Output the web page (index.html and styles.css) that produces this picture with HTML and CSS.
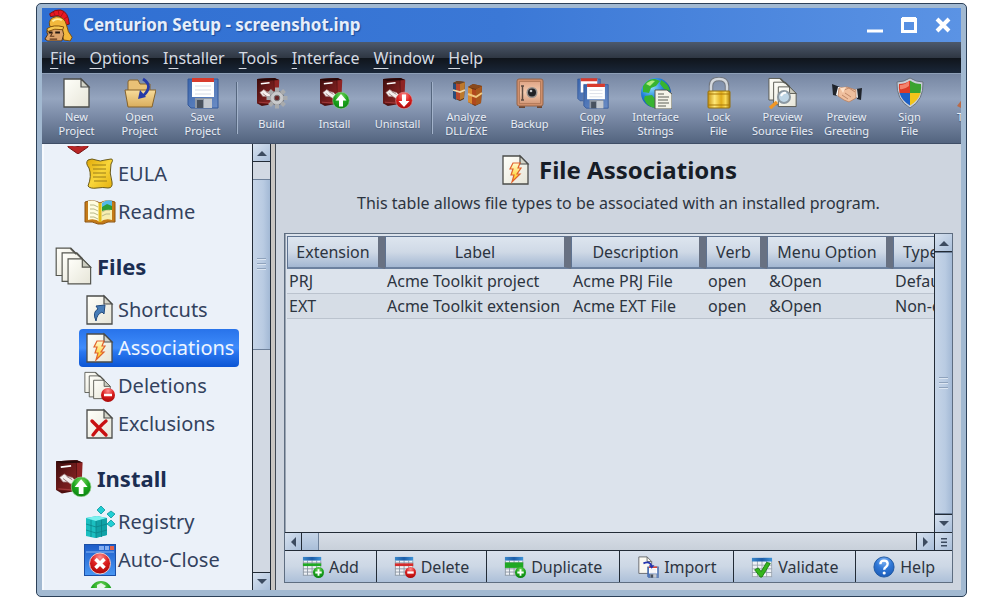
FILE: index.html
```html
<!DOCTYPE html>
<html lang="en">
<head>
<meta charset="utf-8">
<title>Centurion Setup - screenshot.inp</title>
<link rel="stylesheet" href="styles.css">
</head>
<body>
<svg class="sprite" aria-hidden="true">
  <defs>
    <linearGradient id="g-paper" x1="0" y1="0" x2="1" y2="1"><stop offset="0" stop-color="#fffffa"/><stop offset="1" stop-color="#e6e5d8"/></linearGradient>
    <linearGradient id="g-folder" x1="0" y1="0" x2="0" y2="1"><stop offset="0" stop-color="#f8dc9c"/><stop offset="1" stop-color="#d9ad5c"/></linearGradient>
    <linearGradient id="g-box" x1="0" y1="0" x2="1" y2="1"><stop offset="0" stop-color="#3a0c0c"/><stop offset=".5" stop-color="#6b1a1a"/><stop offset="1" stop-color="#8d2525"/></linearGradient>
    <linearGradient id="g-floppy" x1="0" y1="0" x2="1" y2="1"><stop offset="0" stop-color="#3a66ae"/><stop offset="1" stop-color="#6b8cc4"/></linearGradient>
    <linearGradient id="g-gold" x1="0" y1="0" x2="1" y2="0"><stop offset="0" stop-color="#c89210"/><stop offset=".3" stop-color="#ffe97a"/><stop offset=".6" stop-color="#e0ab18"/><stop offset=".8" stop-color="#fbdc58"/><stop offset="1" stop-color="#a87808"/></linearGradient>
    <linearGradient id="g-scroll" x1="0" y1="0" x2="1" y2="1"><stop offset="0" stop-color="#e0a808"/><stop offset=".5" stop-color="#f9d63a"/><stop offset="1" stop-color="#e3b010"/></linearGradient>
    <linearGradient id="g-bolt" x1="0" y1="0" x2="0" y2="1"><stop offset="0" stop-color="#fffbd0"/><stop offset="1" stop-color="#ffc400"/></linearGradient>
    <linearGradient id="g-safe" x1="0" y1="0" x2="0" y2="1"><stop offset="0" stop-color="#e0a586"/><stop offset=".5" stop-color="#f3cbb0"/><stop offset="1" stop-color="#d59a7a"/></linearGradient>
    <radialGradient id="g-green" cx=".5" cy=".25" r=".8"><stop offset="0" stop-color="#7ad860"/><stop offset=".5" stop-color="#1ca51c"/><stop offset="1" stop-color="#0a7d10"/></radialGradient>
    <radialGradient id="g-red" cx=".5" cy=".2" r=".8"><stop offset="0" stop-color="#ff9090"/><stop offset=".5" stop-color="#dc1f1f"/><stop offset="1" stop-color="#a80808"/></radialGradient>
    <radialGradient id="g-blue" cx=".5" cy=".2" r=".8"><stop offset="0" stop-color="#7fb4f4"/><stop offset=".5" stop-color="#2f77d6"/><stop offset="1" stop-color="#1d5cb8"/></radialGradient>
    <radialGradient id="g-globe" cx=".35" cy=".3" r=".8"><stop offset="0" stop-color="#8fe0ff"/><stop offset=".5" stop-color="#1f7fd8"/><stop offset="1" stop-color="#0c3a90"/></radialGradient>
    <linearGradient id="g-win" x1="0" y1="0" x2="0" y2="1"><stop offset="0" stop-color="#1c5cc8"/><stop offset="1" stop-color="#4a98f4"/></linearGradient>
    <linearGradient id="g-thead" x1="0" y1="0" x2="1" y2="0"><stop offset="0" stop-color="#3a86c8"/><stop offset=".5" stop-color="#1c5ca8"/><stop offset="1" stop-color="#3f94d8"/></linearGradient>
  </defs>

  <symbol id="page" viewBox="0 0 32 32"><path d="M3 2h17l8 8v20H3z" fill="url(#g-paper)" stroke="#4b4c4a" stroke-width="1.3"/><path d="M20 2v8h8z" fill="#d4d5c8" stroke="#4b4c4a" stroke-width="1.2"/></symbol>
  <symbol id="pages" viewBox="0 0 32 32">
    <g stroke="#55564f" fill="url(#g-paper)"><path d="M1 1h12l5 5v18H1z"/><path d="M6 5h12l5 5v19H6z"/><path d="M11 10h12l7 7v14H11z"/><path d="M13 1l5 5M18 5l5 5" fill="none" stroke-width="1.6"/><path d="M23 10v7h7z" fill="#cccdc1"/></g>
  </symbol>
  <symbol id="open" viewBox="0 0 32 32"><path d="M4 29V5q0-2 2-2h8l2 4h10v22z" fill="#e9c176" stroke="#85632c"/><path d="M4 13h26l2 0-4 17H4L1 13z" fill="url(#g-folder)" stroke="#85632c"/><path d="M19 2q11 7 0 17" fill="none" stroke="#263aa8" stroke-width="2.8"/><path d="M14 22l2-9 6 7z" fill="#263aa8"/></symbol>
  <symbol id="floppy" viewBox="0 0 32 32"><path d="M1 2h30v29H4l-3-3z" fill="url(#g-floppy)" stroke="#33589a"/><path d="M5 2h22v18H5z" fill="#fff"/><path d="M5 1h22v4H5z" fill="#d83b2d"/><path d="M8 9h16M8 13h16M8 17h16" stroke="#d5dae4"/><path d="M8 21h17v10H8z" fill="#8f98a5"/><path d="M10 23h6v8h-6z" fill="#49525f"/><path d="M17 22h8v9h-8z" fill="#c3c8cf"/></symbol>
  <symbol id="floppies" viewBox="0 0 32 32"><use href="#floppy" x="0" y="0" width="24" height="25"/><use href="#floppy" x="6" y="6" width="26" height="26"/></symbol>
  <symbol id="box" viewBox="0 0 32 32"><path d="M1 2l18-1 4 2-1 24-16 3-5-3z" fill="#4e1010"/><path d="M1 2l17-1 1 27-18-1z" fill="url(#g-box)"/><path d="M19 1l5 2-1 22-4 3z" fill="#8e2424"/><path d="M1 2l18-1 5 2-18 1z" fill="#270808"/><path d="M5 7l9-1" stroke="#fff" stroke-width="1.6"/><path d="M4 16l4-3 3 2 4 1 3 3-4 3-3-2-4 0z" fill="#f5f0ee" stroke="#9b7575" stroke-width=".7"/><path d="M7 17l4 3M10 15l5 3" stroke="#8f6c6c" stroke-width=".8"/><path d="M3 26l14 1" stroke="#a03a3a"/></symbol>
  <symbol id="build" viewBox="0 0 32 32"><use href="#box" width="31" height="31"/><g transform="translate(21 21)"><circle r="7" fill="#b6b8ba" stroke="#6f7174"/><g stroke="#a9abad" stroke-width="4"><path d="M0-10.500v5M0 5.500v5M-10.500 0h5M5.500 0h5M-7.500-7.500l3 3M4.500 4.500l3 3M-7.500 7.500l3-3M4.500-4.500l3-3"/></g><circle r="6" fill="#c9cacc"/><circle r="2.800" fill="#6a2626" stroke="#77797c"/></g></symbol>
  <symbol id="install" viewBox="0 0 32 32"><use href="#box" width="31" height="31"/><circle cx="22" cy="23.500" r="8.300" fill="url(#g-green)" stroke="#8fd08a" stroke-width=".6"/><path d="M22 17l5.500 6.500h-3.500v6h-4v-6h-3.500z" fill="#fff"/></symbol>
  <symbol id="uninstall" viewBox="0 0 32 32"><use href="#box" width="31" height="31"/><circle cx="22" cy="23.500" r="8.300" fill="url(#g-red)" stroke="#e09a9a" stroke-width=".6"/><path d="M22 30l5.500-6h-3.500v-6.500h-4V24h-3.500z" fill="#fff"/></symbol>
  <symbol id="analyze" viewBox="0 0 32 32"><g><path d="M2 6l4-2 8 1-1 17-4 2-7-3z" fill="#59330f"/><path d="M2 6l3 1v16l-3-2z" fill="#274c7c"/><path d="M5 6l4 1v16l-4-1z" fill="#b8472b"/><path d="M9 6l5-1-1 16-4 2z" fill="#bd792b"/><path d="M2 6l5-2 7 1-5 2z" fill="#6d4526"/><path d="M2 13l7 2 5-2" fill="none" stroke="#efd7a6" stroke-width="1.8"/></g><g transform="translate(16 3)"><path d="M1 7l5-3 9 2-1 17-6 3-7-4z" fill="#6a3510"/><path d="M1 7l4 2v15l-4-2z" fill="#d88b33"/><path d="M5 9l4 1v15l-4-1z" fill="#b0481d"/><path d="M9 9l6-3-1 17-5 2z" fill="#a8581d"/><path d="M1 7l5-3 9 2-6 3z" fill="#8a4a1c"/><path d="M1 14l8 3 6-4" fill="none" stroke="#f0c77f" stroke-width="2"/></g></symbol>
  <symbol id="safe" viewBox="0 0 32 32"><path d="M5 29h6v2H5zM23 29h5v2h-5z" fill="#6b4632"/><rect x="3" y="2" width="26" height="27" rx="2" fill="#cf8f6c" stroke="#93644a"/><rect x="5.500" y="4.500" width="21" height="22" fill="url(#g-safe)" stroke="#b57c5c"/><path d="M8.500 9v14M7 9h3M7 23h3" stroke="#5c4a40" stroke-width="1.500"/><circle cx="18" cy="15.500" r="5.500" fill="#96918e"/><circle cx="18" cy="15.500" r="4" fill="#202226"/><circle cx="17" cy="14" r="1.300" fill="#c6c8ca"/></symbol>
  <symbol id="globe" viewBox="0 0 32 32"><circle cx="16" cy="16" r="15" fill="url(#g-globe)"/><path d="M3 9q5-8 12-7l5 2-4 5-5 2-2 5-6-1zM21 3q8 4 9 11l-6-2-4-5zM5 19l7-1 4 5-1 8q-8-1-11-9z" fill="#38b430"/><path d="M6 7q5-5 9-3l-5 5z" fill="#b2ec80"/><path d="M15 13h12l5 4v15H15z" fill="#f4f3e8" stroke="#55574f"/><path d="M18 17h6M18 20h11M18 23h10M18 26h11M18 29h8" stroke="#8f9186" stroke-width="1.300"/></symbol>
  <symbol id="lock" viewBox="0 0 32 32"><path d="M8 15V9q0-7 8-7t8 7v6" fill="none" stroke="#717780" stroke-width="4.500"/><path d="M8 15V9q0-7 8-7t8 7v6" fill="none" stroke="#d4d8dd" stroke-width="2.500"/><rect x="5" y="14" width="22" height="17" rx="1" fill="url(#g-gold)" stroke="#96700e"/><path d="M5 17h22M5 28h22" stroke="#a9790b"/></symbol>
  <symbol id="preview" viewBox="0 0 32 32"><use href="#pages" x="1" width="30" height="31"/><path d="M3 31l7-6" stroke="#f09625" stroke-width="3.500"/><circle cx="17" cy="20" r="6" fill="#bfd6e6" stroke="#8b98a2" stroke-width="2"/><path d="M14 19q2-4 5-3" fill="none" stroke="#fff" stroke-width="2"/></symbol>
  <symbol id="hands" viewBox="0 0 32 32"><path d="M1 7l8 3-3 9-4-1zM31 11l-6 1 1 10 4 1z" fill="#20242b"/><path d="M7 10l3 0-3 9-2-1zM24 13l2-1 1 9-2-1z" fill="#fff"/><path d="M8 11l8-1 9 3v8l-7 4-5-2-6-4z" fill="#efbf9d" stroke="#b98060" stroke-width=".8"/><path d="M13 13l5-2 6 4M11 18l6 4M14 16l6 4" fill="none" stroke="#c08868"/><path d="M9 11l6-1-3 6z" fill="#fde0c6"/></symbol>
  <symbol id="shield" viewBox="0 0 32 32"><path d="M16 1q6 4 13 4 1 18-13 26Q2 23 3 5q7 0 13-4z" fill="#c9cfd8" stroke="#69737f"/><path d="M16 3.500V16H5.500Q4.500 11 5 7q6 0 11-3.500z" fill="#dc3b26"/><path d="M16 3.500V16h10.500q1-5 .500-9-6 0-11-3.500z" fill="#3ba32e"/><path d="M16 16v12.500Q8 24 5.500 16z" fill="#1c60c6"/><path d="M16 16v12.500q8-4.500 10.500-12.500z" fill="#f2c41b"/><path d="M6 8q5 0 9-4v5q-5 4-9 3z" fill="#f4826c"/></symbol>
  <symbol id="tools" viewBox="0 0 32 32"><path d="M0 29l6-8 5 4-7 6z" fill="#b96b49"/></symbol>
  <symbol id="bolt" viewBox="0 0 32 32"><use href="#page" width="32" height="32"/><path d="M13 9h7l-2 5h3l-4 6h3L12 28l2-7h-3l2-6h-3z" fill="url(#g-bolt)" stroke="#e0622c" stroke-width="1.200"/></symbol>
  <symbol id="shortcut" viewBox="0 0 32 32"><use href="#page" width="32" height="32"/><path d="M12 27q-4-9 2-12l-2-3 9-1-1 9-2-2q-5 2-6 9z" fill="#477db8" stroke="#234b7d"/></symbol>
  <symbol id="exclude" viewBox="0 0 32 32"><use href="#page" width="32" height="32"/><path d="M8 13q6 6 14 14M22 13q-6 5-13 14" fill="none" stroke="#c81010" stroke-width="3.400" stroke-linecap="round"/></symbol>
  <symbol id="deletions" viewBox="0 0 32 32"><use href="#pages" width="28" height="31"/><circle cx="24" cy="25" r="7" fill="url(#g-red)"/><path d="M20 25h8" stroke="#fff" stroke-width="2.500"/></symbol>
  <symbol id="eula" viewBox="0 0 32 32"><path d="M4 2q4-2 8 0t9 0l6-1q3 0 0 5-2 9 1 18 1 6-4 6-5-1-11 0-7 1-9-2 4-10 1-18-4-5-1-8z" fill="url(#g-scroll)" stroke="#6a5a1a"/><path d="M8 7h14M9 11h13M9 15h13M9 19h13M10 23h13" stroke="#9a7c18"/></symbol>
  <symbol id="readme" viewBox="0 0 32 32"><path d="M1 6q8-3 15 1 7-4 15-1v20q-8-1-12 2h-5q-5-3-13-2z" fill="#c47a17" stroke="#8c5410"/><path d="M4 5q7-2 12 3v18q-5-4-12-2z" fill="#fffde0"/><path d="M28 5q-7-2-12 3v18q5-4 12-2z" fill="#f7eeb0"/><path d="M6 9q4-1 8 2M6 13q4-1 8 2M6 17q4-1 8 2M6 21q4-1 8 2M18 16q4-3 8-2M18 20q4-3 8-2" fill="none" stroke="#b7b888"/><path d="M14.500 7h3v19h-3z" fill="#e3bd1a"/><path d="M18 7q5-4 10-2v7q-5-1-10 2z" fill="#53b8e8"/><path d="M18 11l5-3 5 2v4q-5-1-10 1z" fill="#2d9d35"/></symbol>
  <symbol id="registry" viewBox="0 0 32 32"><path d="M2 12l11-2 10 2v17l-12 3-9-2z" fill="#1bbfc0"/><path d="M2 12l11-2 10 2-11 3z" fill="#7af0ee"/><path d="M12 15l11-3v17l-11 3z" fill="#11a2a7"/><path d="M7 14v17M12 15v17M17.500 14v17M2 18l10 3 11-3M2 24l10 3 11-3" fill="none" stroke="#0b8489" stroke-width=".8"/><g fill="#20cfd4" stroke="#0d959c" stroke-width=".8"><path d="M17 0l4 4-4 4-4-4zM27 5l4 3-4 4-4-4zM27 14l4 4-4 3-4-3z"/></g></symbol>
  <symbol id="autoclose" viewBox="0 0 32 32"><rect x=".5" y=".5" width="31" height="31" fill="url(#g-win)" stroke="#1b4fa6"/><path d="M15 2h5v4h-5zM21 2h4v4h-4z" fill="#86aff0"/><path d="M26 2h4v4h-4z" fill="#e0604a"/><path d="M2 8h28" stroke="#8bb9f5"/><circle cx="16" cy="19.500" r="10.500" fill="url(#g-red)" stroke="#eec7c7"/><path d="M11.500 15l9 9M20.500 15l-9 9" stroke="#fff" stroke-width="3.600"/></symbol>
  <symbol id="greenball" viewBox="0 0 32 32"><circle cx="17" cy="14" r="11" fill="url(#g-green)"/><path d="M13 7l4-2 5 3-3 3h-6z" fill="#e8f5ea"/></symbol>
  <symbol id="redtip" viewBox="0 0 32 32"><path d="M6 23q10 3 20 0l0 2-10 7-10-7z" fill="#b92525" stroke="#751414"/></symbol>
  <symbol id="centurion" viewBox="0 0 32 36">
    <path d="M6 6q6-5 12-4 8 2 9 15l-4 1q-2-8-8-10l-8 1z" fill="#e81820" stroke="#741010"/>
    <path d="M10 4l2 4M15 2l1 5M21 4l-3 5M25 9l-4 3" stroke="#a80f18"/>
    <path d="M6 19q-2-8 7-10 9 0 11 9l2 7 4 6-2 4-7-1-3-10z" fill="#f2b83c" stroke="#7c4c08"/>
    <path d="M9 14q5-4 10-1" fill="none" stroke="#fff0a0" stroke-width="2"/>
    <path d="M4 22q-2 4 0 6l-3 5 3 2h15l2-7-2-8q-8-1-15 2z" fill="#dba36c" stroke="#50310f"/>
    <path d="M3 22q7-5 18-2l-1 3q-9-2-16 2z" fill="#f6c650" stroke="#7c4c08"/>
    <path d="M5 26h4M12 26h5" stroke="#221710" stroke-width="2"/>
    <path d="M9 26l-2 4h4M6 33h8" fill="none" stroke="#60391d" stroke-width="1.200"/>
  </symbol>

  <symbol id="grid" viewBox="0 0 24 24"><path d="M1 1h20v20H1z" fill="#eff2f6"/><path d="M1 7.500h20M1 14h20M1 17.500h20M1 21h20M1.500 5v16M6 5v16M11 5v16M16 5v16M20.500 5v16" stroke="#8c97a4"/><path d="M1 1h20v4H1z" fill="url(#g-thead)"/></symbol>
  <symbol id="add" viewBox="0 0 24 24"><use href="#grid" width="24" height="24"/><path d="M1 8h20v3H1z" fill="#20a824"/><circle cx="18" cy="18" r="6" fill="url(#g-green)"/><path d="M18 14.500v7M14.500 18h7" stroke="#fff" stroke-width="2"/></symbol>
  <symbol id="delete" viewBox="0 0 24 24"><use href="#grid" width="24" height="24"/><path d="M1 8h20v3H1z" fill="#d42c2c"/><circle cx="18" cy="18" r="6" fill="url(#g-red)"/><path d="M14.500 18h7" stroke="#fff" stroke-width="2.500"/></symbol>
  <symbol id="duplicate" viewBox="0 0 24 24"><use href="#grid" width="24" height="24"/><path d="M1 7h20v6H1z" fill="#20a824"/><circle cx="18" cy="18" r="6" fill="url(#g-green)"/><path d="M18 14.500v7M14.500 18h7" stroke="#fff" stroke-width="2"/></symbol>
  <symbol id="import" viewBox="0 0 24 24"><path d="M2 1h9l5 5v13H2z" fill="#fbfaf2" stroke="#65666a"/><path d="M11 1v5h5" fill="none" stroke="#65666a"/><use href="#floppy" x="11" y="11" width="13" height="13"/><path d="M7 8q7-3 9 3" fill="none" stroke="#2436b0" stroke-width="2"/><path d="M13 10h6l-3 4z" fill="#2436b0"/></symbol>
  <symbol id="validate" viewBox="0 0 24 24"><path d="M1 2h22v21H1z" fill="#eff2f6"/><path d="M1 10h22M1 14h22M1 18h22M1 22.500h22M1.500 5v18M7 5v18M12 5v18M17 5v18M22.500 5v18" stroke="#9aa4b0"/><path d="M1 2h22v4H1z" fill="url(#g-thead)"/><path d="M4 15l4-2 3 4 6-10 4 1-9 15h-2z" fill="#35b51c" stroke="#1b7d10"/></symbol>
  <symbol id="help" viewBox="0 0 24 24"><circle cx="12" cy="12" r="11" fill="url(#g-blue)" stroke="#1c559f"/><path d="M8 9q0-4 4-4t4 3.500q0 2-2 3.500-1.800 1.200-1.800 3" fill="none" stroke="#fff" stroke-width="2.600"/><circle cx="12.200" cy="18.500" r="1.700" fill="#fff"/></symbol>
</svg>

<div class="window">
  <header class="titlebar">
    <svg class="logo"><use href="#centurion"/></svg>
    <span class="caption">Centurion Setup - screenshot.inp</span>
    <div class="controls">
      <button class="ctl" aria-label="Minimize"><svg viewBox="0 0 16 16"><path d="M0 14h16" stroke="#fff" stroke-width="3"/></svg></button>
      <button class="ctl" aria-label="Maximize"><svg viewBox="0 0 16 16"><path d="M1 2.500h14" stroke="#fff" stroke-width="5"/><path d="M1.500 1v13.500h13V1" fill="none" stroke="#fff" stroke-width="3"/></svg></button>
      <button class="ctl" aria-label="Close"><svg viewBox="0 0 16 16"><path d="M2 2l12 12M14 2L2 14" stroke="#fff" stroke-width="4"/></svg></button>
    </div>
  </header>

  <nav class="menubar" aria-label="Menu">
    <button><u>F</u>ile</button><button><u>O</u>ptions</button><button>I<u>n</u>staller</button><button><u>T</u>ools</button><button><u>I</u>nterface</button><button><u>W</u>indow</button><button><u>H</u>elp</button>
  </nav>

  <div class="toolbar" role="toolbar">
    <button class="tool"><svg><use href="#page"/></svg><span>New<br>Project</span></button>
    <button class="tool"><svg><use href="#open"/></svg><span>Open<br>Project</span></button>
    <button class="tool"><svg><use href="#floppy"/></svg><span>Save<br>Project</span></button>
    <i class="sep"></i>
    <button class="tool"><svg><use href="#build"/></svg><span>Build</span></button>
    <button class="tool"><svg><use href="#install"/></svg><span>Install</span></button>
    <button class="tool"><svg><use href="#uninstall"/></svg><span>Uninstall</span></button>
    <i class="sep"></i>
    <button class="tool"><svg><use href="#analyze"/></svg><span>Analyze<br>DLL/EXE</span></button>
    <button class="tool"><svg><use href="#safe"/></svg><span>Backup</span></button>
    <button class="tool"><svg><use href="#floppies"/></svg><span>Copy<br>Files</span></button>
    <button class="tool"><svg><use href="#globe"/></svg><span>Interface<br>Strings</span></button>
    <button class="tool"><svg><use href="#lock"/></svg><span>Lock<br>File</span></button>
    <button class="tool wide"><svg><use href="#preview"/></svg><span>Preview<br>Source Files</span></button>
    <button class="tool"><svg><use href="#hands"/></svg><span>Preview<br>Greeting</span></button>
    <button class="tool"><svg><use href="#shield"/></svg><span>Sign<br>File</span></button>
    <button class="tool cut"><svg><use href="#tools"/></svg><span>T</span></button>
  </div>

  <div class="body">
    <nav class="sidebar" aria-label="Sections">
      <div class="tree">
        <svg class="peek head"><use href="#redtip"/></svg>
        <a class="item" href="#eula"><svg><use href="#eula"/></svg><span>EULA</span></a>
        <a class="item" href="#readme"><svg><use href="#readme"/></svg><span>Readme</span></a>
        <h2 class="group"><svg><use href="#pages"/></svg><span>Files</span></h2>
        <a class="item" href="#shortcut"><svg><use href="#shortcut"/></svg><span>Shortcuts</span></a>
        <a class="item active" href="#bolt" aria-current="page"><svg><use href="#bolt"/></svg><span>Associations</span></a>
        <a class="item" href="#deletions"><svg><use href="#deletions"/></svg><span>Deletions</span></a>
        <a class="item" href="#exclude"><svg><use href="#exclude"/></svg><span>Exclusions</span></a>
        <h2 class="group"><svg><use href="#install"/></svg><span>Install</span></h2>
        <a class="item" href="#registry"><svg><use href="#registry"/></svg><span>Registry</span></a>
        <a class="item" href="#autoclose"><svg><use href="#autoclose"/></svg><span>Auto-Close</span></a>
        <svg class="peek"><use href="#greenball"/></svg>
      </div>
    </nav>
    <div class="vscroll side-scroll">
      <button class="arrow" aria-label="Scroll up"><svg viewBox="0 0 10 6"><path d="M0 6l5-5 5 5z"/></svg></button>
      <div class="gap"></div>
      <div class="thumb"><i class="grip"></i></div>
      <div class="rest"></div>
      <button class="arrow" aria-label="Scroll down"><svg viewBox="0 0 10 6"><path d="M0 0l5 5 5-5z"/></svg></button>
    </div>
    <div class="splitter"></div>

    <main class="pane">
      <h1><svg><use href="#bolt"/></svg><span>File Associations</span></h1>
      <p>This table allows file types to be associated with an installed program.</p>
      <div class="frame">
        <div class="upper">
          <div class="view">
            <table>
              <colgroup><col class="c-ext"><col class="c-label"><col class="c-desc"><col class="c-verb"><col class="c-menu"><col class="c-type"></colgroup>
              <thead><tr><th>Extension</th><th>Label</th><th>Description</th><th>Verb</th><th>Menu Option</th><th>Type</th></tr></thead>
              <tbody>
                <tr><td>PRJ</td><td>Acme Toolkit project</td><td>Acme PRJ File</td><td>open</td><td>&amp;Open</td><td>Default</td></tr>
                <tr><td>EXT</td><td>Acme Toolkit extension</td><td>Acme EXT File</td><td>open</td><td>&amp;Open</td><td>Non-default</td></tr>
              </tbody>
            </table>
          </div>
          <div class="vscroll">
            <button class="arrow" aria-label="Scroll up"><svg viewBox="0 0 10 6"><path d="M0 6l5-5 5 5z"/></svg></button>
            <div class="thumb full"><i class="grip"></i></div>
            <button class="arrow" aria-label="Scroll down"><svg viewBox="0 0 10 6"><path d="M0 0l5 5 5-5z"/></svg></button>
          </div>
        </div>
        <div class="hscroll">
          <button class="arrow" aria-label="Scroll left"><svg class="side" viewBox="0 0 6 10"><path d="M6 0L1 5l5 5z"/></svg></button>
          <div class="hthumb"></div>
          <div class="rest"></div>
          <button class="arrow" aria-label="Scroll right"><svg class="side" viewBox="0 0 6 10"><path d="M0 0l5 5-5 5z"/></svg></button>
          <button class="arrow" aria-label="Columns"><svg class="list" viewBox="0 0 10 10"><path d="M2 1h6v1.500H2zM2 4.500h6V6H2zM2 8h6v1.500H2z"/></svg></button>
        </div>
        <div class="actions">
          <button><svg><use href="#add"/></svg>Add</button>
          <button><svg><use href="#delete"/></svg>Delete</button>
          <button><svg><use href="#duplicate"/></svg>Duplicate</button>
          <button><svg><use href="#import"/></svg>Import</button>
          <button><svg><use href="#validate"/></svg>Validate</button>
          <button><svg><use href="#help"/></svg>Help</button>
        </div>
      </div>
    </main>
  </div>
</div>
</body>
</html>
```
FILE: styles.css
```css
* { box-sizing: border-box; }

body {
  margin: 0;
  height: 100vh;
  padding: 3px 33px 3px 36px;
  background: #fff;
  font-family: "Noto Sans", "Open Sans", sans-serif;
  font-size: 16px;
  color: #2c3440;
}

button {
  margin: 0;
  padding: 0;
  border: 0;
  background: none;
  font: inherit;
  color: inherit;
}

svg { display: block; flex: none; }
.sprite { position: absolute; width: 0; height: 0; }

.window {
  height: 100%;
  display: flex;
  flex-direction: column;
  border: 1px solid #2c4058;
  border-radius: 5px;
  padding: 4px 5px 6px;
  background: #a2b9d1;
  overflow: hidden;
}

/* Title bar */
.titlebar {
  flex: none;
  height: 34px;
  display: flex;
  align-items: center;
  padding: 0 10px 0 2px;
  background: linear-gradient(90deg, #2f6fd2, #3b78d6 50%, #5b93e4);
}
.logo { width: 30px; height: 34px; }
.caption {
  flex: 1;
  margin-left: 9px;
  font-size: 17px;
  line-height: 24px;
  font-weight: 700;
  color: #e6eefb;
  text-shadow: 1px 1px 1px #1c4a98;
}
.controls { display: flex; gap: 18px; }
.ctl svg { width: 16px; height: 16px; }

/* Menu bar */
.menubar {
  flex: none;
  height: 31px;
  display: flex;
  align-items: center;
  gap: 14px;
  padding: 0 8px;
  background: linear-gradient(#4d596c, #2e3642 52%, #10151c 53%, #1a2739);
  font-size: 16px;
  line-height: 24px;
  color: #d5dae2;
}
.menubar u { text-underline-offset: 4px; text-decoration-thickness: 1px; }

/* Toolbar */
.toolbar {
  flex: none;
  height: 71px;
  display: flex;
  padding: 3px 0 0 3px;
  border-top: 1px solid #8fa0b8;
  border-bottom: 1px solid #3f4e66;
  background: linear-gradient(#7686a2, #95a5bf 36%, #7c8ca8 60%, #53647f);
  overflow: hidden;
}
.tool {
  flex: none;
  width: 63px;
  display: flex;
  flex-direction: column;
  align-items: center;
  justify-content: flex-start;
  color: #e9eef6;
  font-size: 11px;
  line-height: 14px;
  white-space: nowrap;
}
.tool.wide { width: 65px; }
.tool svg { width: 32px; height: 32px; }
.tool span { height: 30px; display: flex; align-items: center; text-align: center; text-shadow: 0 1px 1px #4d5d78; }
.tool.cut { align-items: flex-start; padding-left: 16px; }
.tool.cut span { padding-bottom: 14px; }
.sep {
  flex: none;
  width: 6px;
  height: 52px;
  margin-top: 5px;
  background: linear-gradient(90deg, transparent 2px, #56677f 2px, #56677f 3px, #a3b3cb 3px, #a3b3cb 4px, transparent 4px);
}

/* Body */
.body { flex: 1; min-height: 0; display: flex; background: #ced5df; }

.sidebar {
  flex: none;
  width: 210px;
  padding: 2px 0;
  background: #ebf1f9;
  border-left: 2px solid #f6f9fd;
  overflow: hidden;
}
.tree { height: 100%; overflow: hidden; padding: 0 13px 0 35px; }
.peek { width: 32px; height: 32px; }
.peek { margin-left: 5px; }
.peek.head { margin: -24px 0 0 -17px; }
.item {
  display: flex;
  align-items: center;
  gap: 2px;
  height: 38px;
  margin-top: 1px;
  margin-bottom: -1px;
  padding-left: 5px;
  border-radius: 4px;
  font-size: 20px;
  line-height: 28px;
  color: #33425e;
  text-decoration: none;
  white-space: nowrap;
}
.item svg { width: 32px; height: 32px; }
.item.active { background: linear-gradient(#2873ea, #3f8cfb 50%, #2a77f0 60%, #0b55d4); color: #eef5ff; }
.group {
  display: flex;
  align-items: center;
  gap: 4px;
  height: 60px;
  margin: 0 0 0 -24px;
  padding-top: 12px;
  font-size: 22px;
  line-height: 30px;
  font-weight: 700;
  color: #1b2e52;
}
.group svg { width: 38px; height: 38px; }

/* Scroll bars */
.vscroll {
  flex: none;
  width: 19px;
  display: flex;
  flex-direction: column;
  border: 0 solid #222b36;
  border-width: 0 1px;
  background: #d2d9e3;
}
.arrow {
  flex: none;
  width: 17px;
  height: 17px;
  display: flex;
  align-items: center;
  justify-content: center;
  background: linear-gradient(135deg, #d6e1ef, #aabfda);
  fill: #3c4b60;
}
.arrow svg { width: 10px; height: 6px; }
.arrow svg.side { width: 6px; height: 10px; }
.arrow svg.list { width: 10px; height: 10px; }
.vscroll .arrow { height: 18px; }
.vscroll .arrow:first-child { border-bottom: 1px solid #222b36; }
.vscroll .arrow:last-child { border-top: 1px solid #222b36; }
.gap { flex: 17; }
.thumb {
  flex: 170;
  display: flex;
  align-items: center;
  justify-content: center;
  border: 1px solid #6d8099;
  border-width: 1px 0;
  background: linear-gradient(90deg, #c6d5e8, #b9cbe2 60%, #a3b9d5);
}
.grip { width: 9px; height: 12px; background: repeating-linear-gradient(#8fa3bd 0 1px, #dbe5f1 1px 2px, transparent 2px 5px); }
.side-scroll .rest { flex: 224; }
.splitter { flex: none; width: 5px; border-right: 1px solid #3f4853; background: #c9c6c2; }

/* Main pane */
.pane { flex: 1; min-width: 0; display: flex; flex-direction: column; padding: 8px 8px 7px; }
.pane h1 {
  display: flex;
  align-items: center;
  justify-content: center;
  gap: 7px;
  margin: 0;
  font-size: 24px;
  line-height: 36px;
  color: #171d27;
}
.pane h1 svg { width: 32px; height: 32px; }
.pane p { margin: 1px 0 16px; font-size: 16px; line-height: 28px; text-align: center; white-space: nowrap; }

.frame { flex: 1; min-height: 0; display: flex; flex-direction: column; border: 1px solid #5e6d80; }
.upper { flex: 1; min-height: 0; display: flex; }
.upper .vscroll { width: 18px; border-width: 0 0 0 1px; }
.view { flex: 1; min-width: 0; overflow: hidden; padding: 2px 1px 0; background: #dce3ec; border-left: 1px solid #9aa5b3; }

table { width: 700px; table-layout: fixed; border-collapse: separate; border-spacing: 0; font-size: 16px; white-space: nowrap; }
.c-ext { width: 98px; }
.c-label { width: 186px; }
.c-desc { width: 135px; }
.c-verb { width: 61px; }
.c-menu { width: 126px; }
.c-type { width: 94px; }
th {
  height: 33px;
  padding: 0;
  font-weight: 400;
  line-height: 24px;
  border: 1px solid #5f7391;
  border-right: 7px solid #687182;
  border-bottom: 2px solid #6c819f;
  background: linear-gradient(#dde5ef, #cfd9e6 50%, #a3b7d2);
}
th:last-child { text-align: left; padding-left: 9px; }
td { height: 25px; padding: 0 2px; line-height: 24px; border-bottom: 1px solid #bbc3ce; }
tbody tr:nth-child(even) { background: #d6dde6; }

.hscroll { flex: none; height: 18px; display: flex; border-top: 1px solid #222b36; background: linear-gradient(#d8dee7, #c8d0da); }
.hscroll .arrow:first-child { border-right: 1px solid #222b36; }
.hscroll .rest { flex: 1; }
.hscroll .rest ~ .arrow { width: 18px; border-left: 1px solid #222b36; }
.hthumb { width: 17px; border-right: 1px solid #6d8099; background: linear-gradient(#c6d5e8, #a9bed8); }

.actions { flex: none; display: flex; border-top: 1px solid #222b36; }
.actions button {
  flex: 1 1 auto;
  height: 31px;
  display: flex;
  align-items: center;
  justify-content: center;
  gap: 5px;
  font-size: 16px;
  line-height: 24px;
  background: linear-gradient(#d9e1ec, #ccd7e5 50%, #adc0d9);
}
.actions button + button { border-left: 1px solid #222b36; }
.actions svg { width: 22px; height: 22px; }
```
